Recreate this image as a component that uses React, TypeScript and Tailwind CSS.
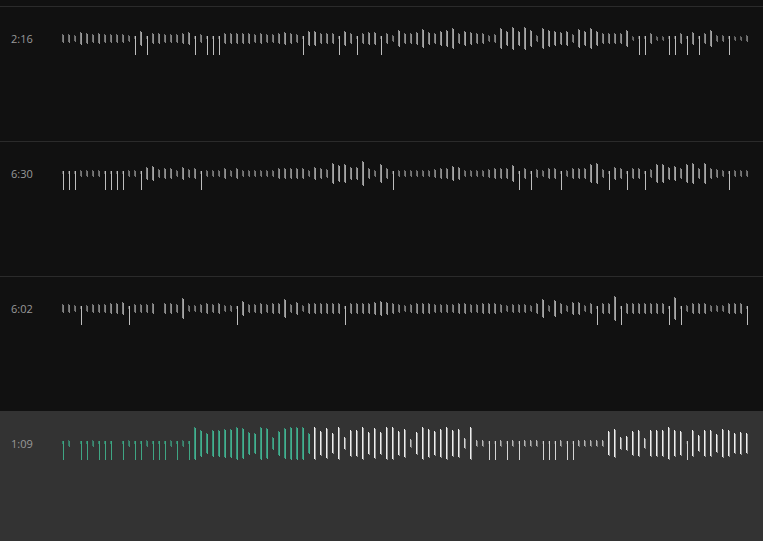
const D = -1;

const tracks = [
  {
    time: '2:16',
    bars: [
      4, 4, 3, 6, 5, 4, 5, 4, 4, 4, 4, 3, D, 7, D, 5, 5, 4, 4, 4, 5, 6, D, 4, D, D, D, 5, 5, 5, 5, 5, 4, 5, 4, 4, 5, 6, 5, 4,
      D, 7, 7, 5, 5, 5, D, 7, 5, D, 5, 6, 6, D, 5, 3, 8, 5, 5, 6, 9, 6, 5, 7, 8, 10, 5, 7, 6, 5, 5, 3, 4, 10, 7, 11, 7, 11, 8, 3,
      10, 8, 7, 6, 7, 4, 9, 7, 10, 7, 5, 5, 5, 5, 8, 2, D, D, 5, 2, 2, D, D, 5, D, 6, D, 5, 8, 3, 3, D, 2, 2, 3,
    ],
  },
  {
    time: '6:30',
    bars: [
      D, D, D, 3, 3, 3, 3, D, D, D, D, 3, 3, D, 6, 7, 4, 5, 5, 3, 6, 4, 5, D, 3, 3, 3, 5, 3, 5, 3, 3, 3, 3, 3, 3, 5, 5, 5, 5,
      5, 3, 6, 5, 4, 10, 8, 9, 6, 6, 12, 5, 3, 9, 5, D, 3, 3, 3, 3, 3, 3, 4, 5, 5, 7, 6, 3, 3, 3, 3, 4, 5, 5, 5, 8, D, 5, D, 4,
      3, 5, 5, D, 3, 5, 5, 5, 9, 10, 4, D, 6, 5, D, 5, 5, D, 4, 9, 9, 6, 7, 5, 9, 10, 5, 10, 5, 4, 3, D, 3, 3, 3,
    ],
  },
  {
    time: '6:02',
    bars: [
      4, 4, 3, D, 3, 4, 4, 4, 5, 5, 6, D, 4, 4, 4, 5, 0, 5, 5, 4, 10, 3, 3, 4, 5, 4, 5, 3, 3, D, 7, 4, 4, 5, 4, 5, 5, 9, 4, 6,
      3, 5, 5, 5, 5, 5, 5, D, 5, 5, 5, 5, 6, 7, 6, 5, 4, 3, 4, 5, 5, 5, 4, 4, 4, 4, 5, 5, 4, 4, 5, 5, 5, 4, 3, 4, 4, 4, 3, 5,
      9, 3, 8, 5, 3, 6, 6, 3, 5, D, 5, 5, 12, D, 5, 5, 5, 5, 5, 5, 5, D, 11, D, 3, 5, 5, 5, 3, 3, 3, 5, 5, 5, D,
    ],
  },
  {
    time: '1:09',
    active: true,
    played: 42,
    bars: [
      D, 3, 0, D, D, 3, D, D, D, 0, D, 3, D, D, 3, D, D, D, 3, D, 3, D, 16, 13, 10, 13, 13, 14, 14, 16, 15, 11, 10, 16, 15, 6, 12, 15, 16, 16,
      16, 10, 16, 12, 15, 10, 16, 6, 13, 13, 16, 11, 15, 11, 16, 16, 12, 14, 4, 11, 16, 14, 12, 14, 16, 13, 14, 5, 16, 3, 3, D, D, 3, D, 3, D, 3, 3, 3,
      D, D, D, 3, D, D, 3, 3, 3, 3, 3, 12, 14, 6, 7, 12, 13, 5, 13, 13, 13, 16, 13, 12, D, 13, 8, 13, 13, 9, 14, 13, 10, 11, 10,
    ],
  },
];

const Bar = ({ value, active, played }: { value: number; active?: boolean; played?: boolean }) => {
  if (value === 0) return <span className="w-[6px] flex-none" />;

  if (value === D) {
    return (
      <span className="w-[6px] flex-none h-full relative">
        <span className={`absolute left-0 top-[17px] w-[1px] h-[3px] ${played ? 'bg-[#2f7d65]' : 'bg-[#555]'}`} />
        <span
          className={`absolute left-[1px] top-[17px] w-[1px] h-[19px] ${
            played ? 'bg-[#3fa583]' : active ? 'bg-[#d4d4d4]' : 'bg-[#bdbdbd]'
          }`}
        />
      </span>
    );
  }

  const left = played ? 'bg-[#37927a]' : active ? 'bg-[#eeeeee]' : 'bg-[#8c8c8c]';
  const right = played ? 'bg-[#45b18e]' : active ? 'bg-[#9a9a9a]' : 'bg-[#a8a8a8]';
  // short bars come out fainter in the waveform
  const opacity = Math.min(1, 0.45 + value * 0.08);

  return (
    <span className="w-[6px] flex-none h-full flex items-center -translate-y-[1px]" style={{ opacity }}>
      <span className={`w-[1px] ${left}`} style={{ height: value * 2 }} />
      <span className={`w-[1px] translate-y-[1px] ${right}`} style={{ height: value * 2 }} />
    </span>
  );
};

const TrackRow = ({ track }: { track: (typeof tracks)[number] }) => (
  <div className={`h-[135px] flex-none flex items-start ${track.active ? 'bg-[#333333]' : 'border-t border-[#2b2b2b]'}`}>
    <div className={`w-[62px] flex-none pl-[11px] text-[11px] leading-4 text-[#999] ${track.active ? 'mt-[25px]' : 'mt-[24px]'}`}>
      {track.time}
    </div>
    <div className={`flex h-[40px] ${track.active ? 'mt-[13px]' : 'mt-[12px]'}`}>
      {track.bars.map((value, i) => (
        <Bar key={i} value={value} active={track.active} played={track.played !== undefined && i < track.played} />
      ))}
    </div>
  </div>
);

const App = () => (
  <div className="h-screen overflow-hidden bg-[#111111] pt-[6px] flex flex-col font-['Open_Sans',sans-serif]">
    {tracks.map((track) => (
      <TrackRow key={track.time} track={track} />
    ))}
  </div>
);

export default App;
